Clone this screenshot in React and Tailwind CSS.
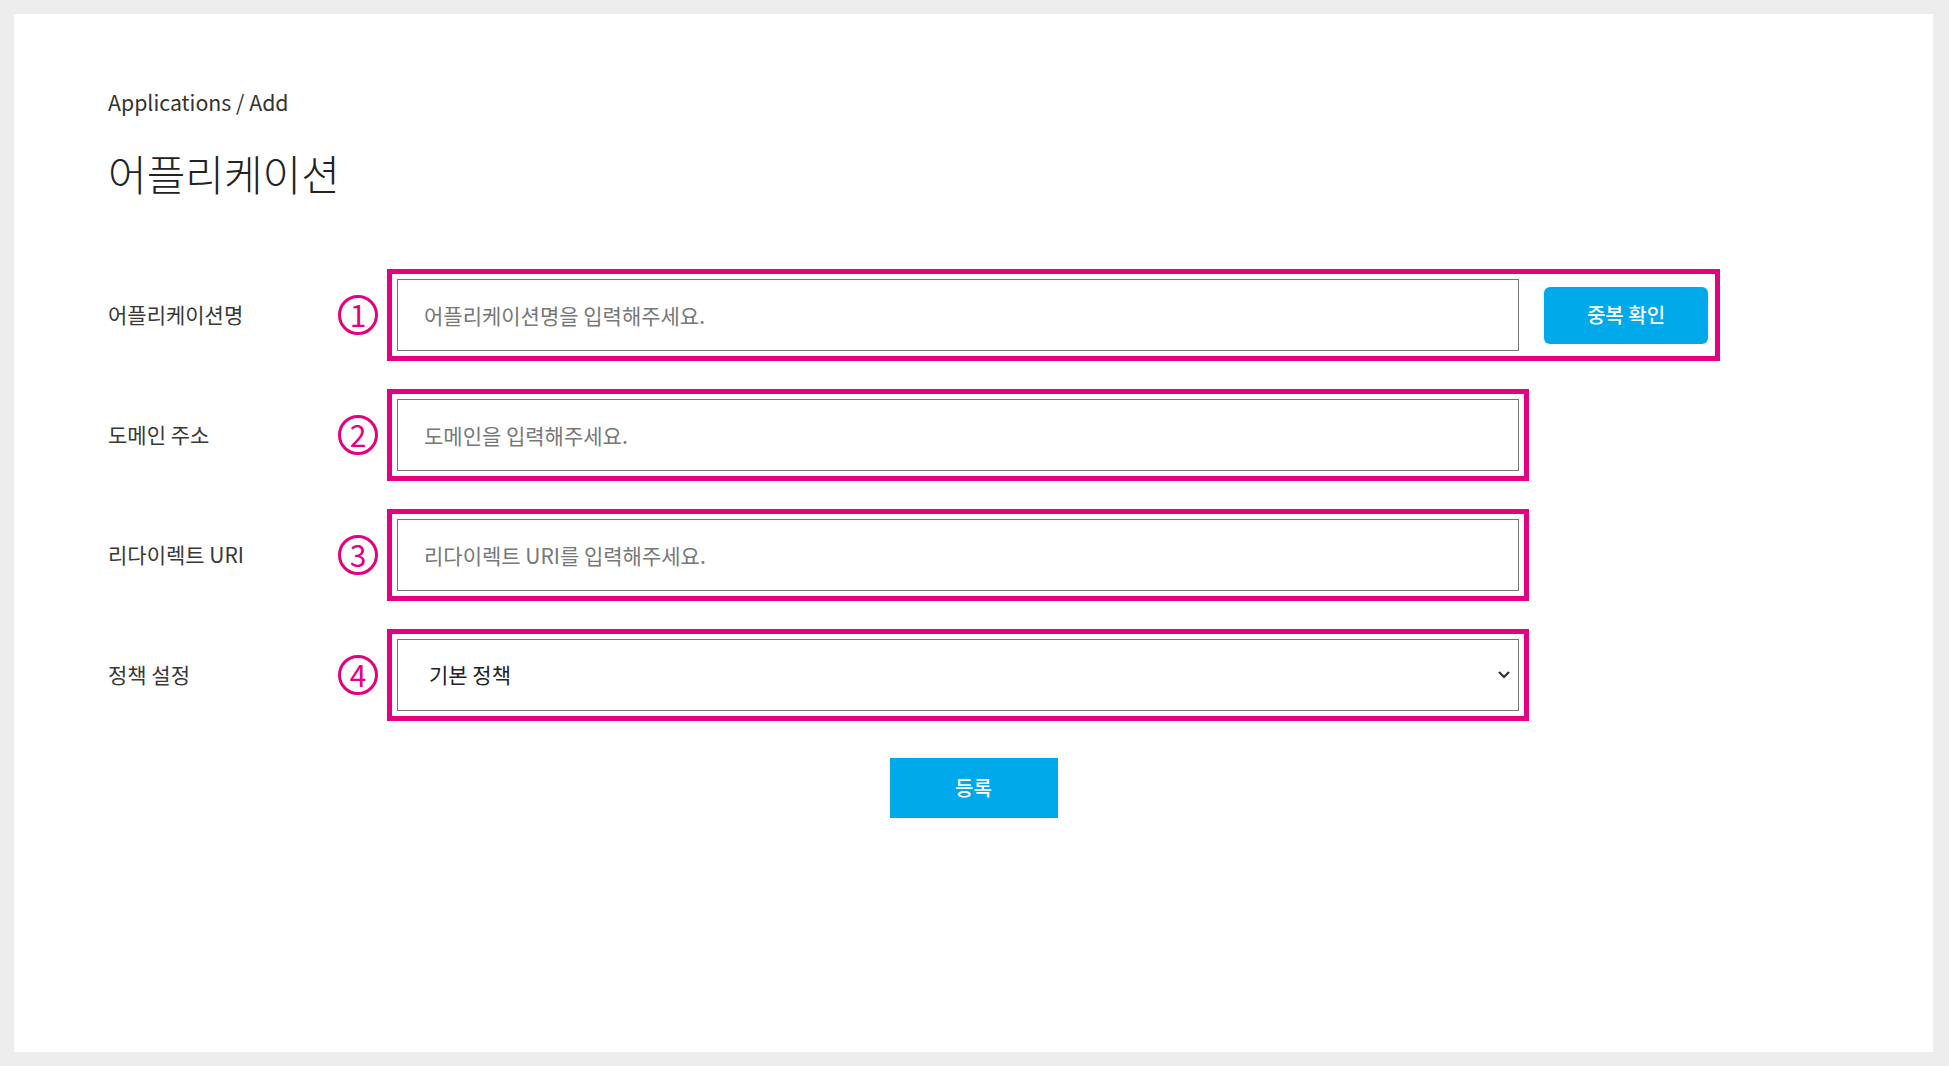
import React, { useState } from 'react';

const font = { fontFamily: '"Noto Sans CJK KR", "Noto Sans", sans-serif' };

const Marker = ({ n }) => (
  <div className="w-[40px] h-[40px] rounded-full border-[3px] border-[#e4007f] flex items-center justify-center text-[#e4007f] text-[30px] leading-none shrink-0">
    <span className="-mt-[2px]">{n}</span>
  </div>
);

const Row = ({ label, n, children }) => (
  <div className="flex items-center mb-[28px]">
    <div className="w-[230px] text-[21px] text-[#383838] shrink-0">{label}</div>
    <Marker n={n} />
    <div className="ml-[9px] border-[5px] border-[#e4007f] p-[5px] flex items-center">{children}</div>
  </div>
);

const inputCls =
  'w-[1122px] h-[72px] border border-[#767676] px-[26px] text-[21px] text-[#333] placeholder:text-[#777] outline-none bg-white';

const App = () => {
  const [name, setName] = useState('');
  const [domain, setDomain] = useState('');
  const [uri, setUri] = useState('');
  const [policy, setPolicy] = useState('default');

  return (
    <div className="min-h-screen bg-[#ededed] pt-[14px] pl-[14px] pr-[16px] pb-[14px]" style={font}>
      <div className="bg-white h-[1038px] pt-[72px] pl-[94px]">
        <div className="text-[21.3px] leading-[32px] text-[#333]">Applications / Add</div>
        <h1 className="text-[42px] leading-[56px] text-[#222] font-light mt-[27px] mb-[68px]">어플리케이션</h1>

        <Row label="어플리케이션명" n="1">
          <input className={inputCls} placeholder="어플리케이션명을 입력해주세요." value={name} onChange={(e) => setName(e.target.value)} />
          <button className="ml-[25px] mr-[2px] w-[164px] h-[57px] rounded-[6px] bg-[#00a9ea] text-white text-[20px] font-medium">
            중복 확인
          </button>
        </Row>

        <Row label="도메인 주소" n="2">
          <input className={inputCls} placeholder="도메인을 입력해주세요." value={domain} onChange={(e) => setDomain(e.target.value)} />
        </Row>

        <Row label="리다이렉트 URI" n="3">
          <input className={inputCls} placeholder="리다이렉트 URI를 입력해주세요." value={uri} onChange={(e) => setUri(e.target.value)} />
        </Row>

        <Row label="정책 설정" n="4">
          <div className="relative">
            <select
              className="w-[1122px] h-[72px] border border-[#767676] pl-[31px] text-[21px] text-[#222] appearance-none bg-white outline-none"
              value={policy}
              onChange={(e) => setPolicy(e.target.value)}
            >
              <option value="default">기본 정책</option>
              <option value="custom">사용자 정책</option>
            </select>
            <svg className="absolute right-[8px] top-[31px] pointer-events-none" width="14" height="10" viewBox="0 0 14 10">
              <path d="M2 2l5 5 5-5" fill="none" stroke="#333" strokeWidth="2.2" />
            </svg>
          </div>
        </Row>

        <div className="flex justify-center pr-[94px] mt-[37px]">
          <button className="w-[168px] h-[60px] bg-[#00a9ea] text-white text-[20px] font-medium">등록</button>
        </div>
      </div>
    </div>
  );
};

export default App;
